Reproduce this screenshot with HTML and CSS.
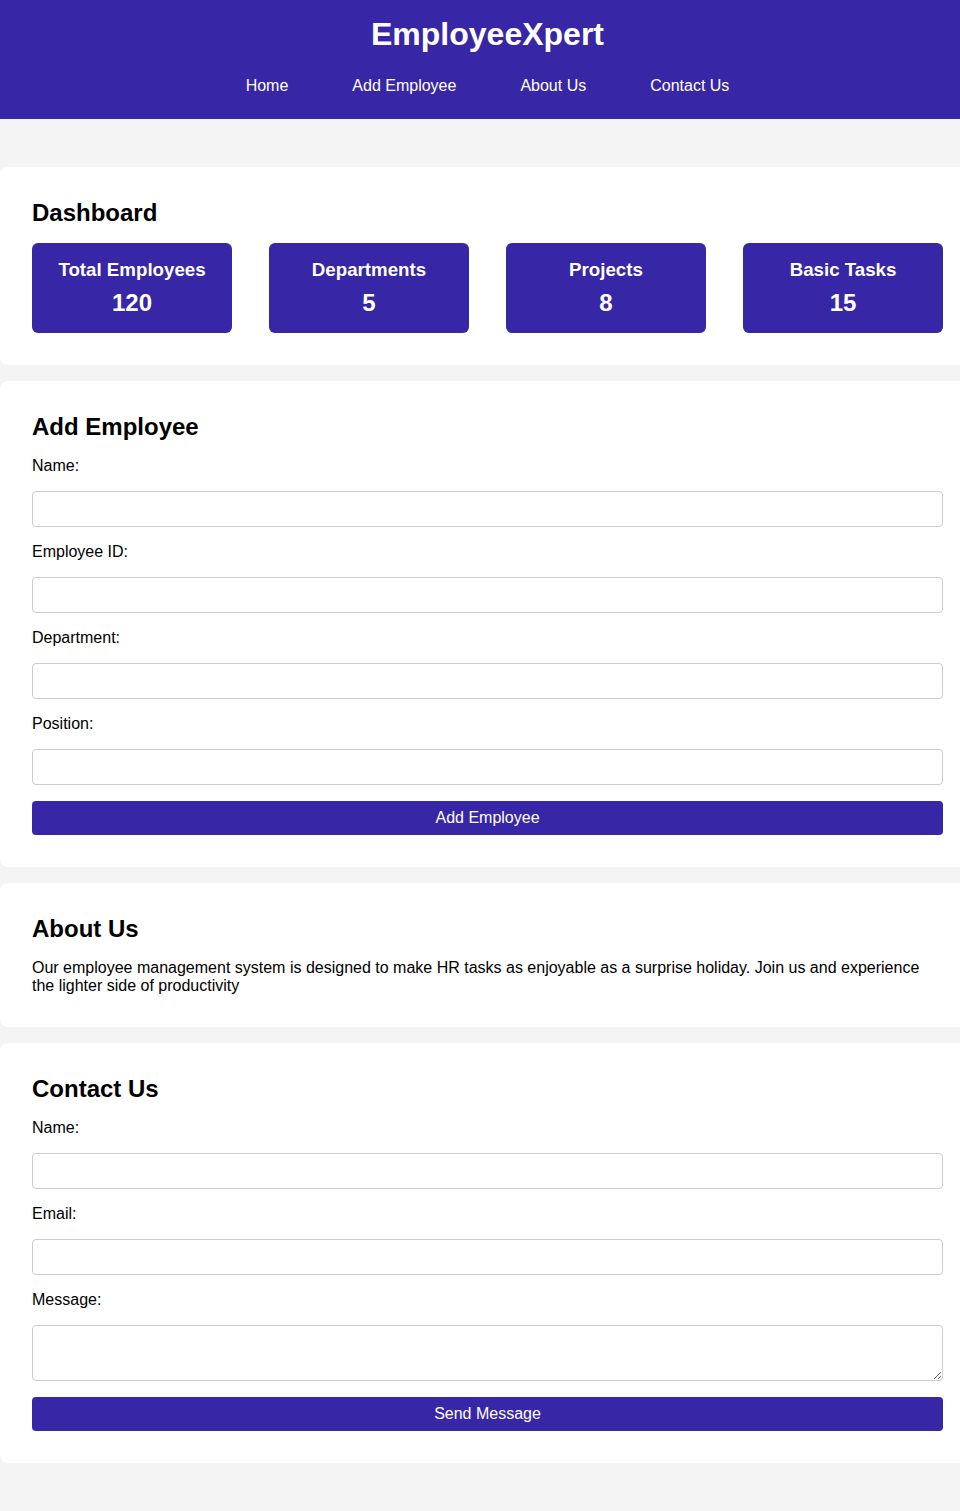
FILE: index.html
```html
<!DOCTYPE html>
<html lang="en">
<head>
<meta charset="utf-8">
<title>EmployeeXpert</title>
<link rel="stylesheet" href="styles.css">
</head>
<body>
<header class="site-header">
  <h1 class="brand">EmployeeXpert</h1>
  <nav class="nav">
    <a href="#" class="nav-link">Home</a>
    <a href="#" class="nav-link">Add Employee</a>
    <a href="#" class="nav-link">About Us</a>
    <a href="#" class="nav-link">Contact Us</a>
  </nav>
</header>
<main class="main">
  <section class="panel">
    <h2 class="panel-title">Dashboard</h2>
    <div class="cards">
      <div class="card"><div class="card-title">Total Employees</div><div class="card-value">120</div></div>
      <div class="card"><div class="card-title">Departments</div><div class="card-value">5</div></div>
      <div class="card"><div class="card-title">Projects</div><div class="card-value">8</div></div>
      <div class="card"><div class="card-title">Basic Tasks</div><div class="card-value">15</div></div>
    </div>
  </section>
  <section class="panel">
    <h2 class="panel-title">Add Employee</h2>
    <form class="form">
      <label class="label">Name:</label>
      <input class="field" type="text">
      <label class="label">Employee ID:</label>
      <input class="field" type="text">
      <label class="label">Department:</label>
      <input class="field" type="text">
      <label class="label">Position:</label>
      <input class="field" type="text">
      <button class="btn" type="button">Add Employee</button>
    </form>
  </section>
  <section class="panel">
    <h2 class="panel-title">About Us</h2>
    <p class="text">Our employee management system is designed to make HR tasks as enjoyable as a surprise holiday. Join us and experience the lighter side of productivity</p>
  </section>
  <section class="panel">
    <h2 class="panel-title">Contact Us</h2>
    <form class="form">
      <label class="label">Name:</label>
      <input class="field" type="text">
      <label class="label">Email:</label>
      <input class="field" type="email">
      <label class="label">Message:</label>
      <textarea class="field area"></textarea>
      <button class="btn" type="button">Send Message</button>
    </form>
  </section>
</main>
</body>
</html>
```
FILE: styles.css
```css
html {
  overflow-x: hidden;
}
body {
  margin: 0;
  width: 975px;
  background: #f4f4f4;
  font-family: "Liberation Sans", Arial, sans-serif;
  font-size: 16px;
  color: #000;
}
.site-header {
  background: #3726a6;
  color: #fff;
  text-align: center;
  padding: 16px 0;
}
.brand {
  margin: 0 0 16px;
  font-size: 32px;
  font-weight: bold;
  line-height: 37px;
}
.nav {
  display: flex;
  justify-content: center;
}
.nav-link {
  color: #fff;
  text-decoration: none;
  margin: 0 32px;
  padding: 8px 0;
  line-height: 18px;
}
.main {
  padding: 32px 0;
}
.panel {
  background: #fff;
  margin: 16px 0;
  padding: 32px;
  border-radius: 8px;
}
.panel-title {
  margin: 0 0 16px;
  font-size: 24px;
  line-height: 28px;
  font-weight: bold;
}
.cards {
  display: flex;
  justify-content: space-between;
}
.card {
  width: 200px;
  height: 90px;
  box-sizing: border-box;
  background: #3726a6;
  color: #fff;
  border-radius: 6px;
  text-align: center;
  padding: 16px 0 0;
}
.card-title {
  font-size: 18.72px;
  font-weight: bold;
  line-height: 21px;
  margin-bottom: 9px;
}
.card-value {
  font-size: 24px;
  font-weight: bold;
  line-height: 28px;
}
.form {
  display: flex;
  flex-direction: column;
}
.label {
  display: block;
  line-height: 18px;
  margin-bottom: 16px;
}
.field {
  display: block;
  box-sizing: border-box;
  width: 100%;
  height: 36px;
  padding: 8px;
  border: 1px solid #ccc;
  border-radius: 4px;
  font-family: "Liberation Sans", Arial, sans-serif;
  font-size: 16px;
  margin: 0 0 16px;
  background: #fff;
}
.area {
  height: 56px;
}
.btn {
  display: block;
  width: 100%;
  height: 34px;
  background: #3726a6;
  color: #fff;
  border: none;
  border-radius: 4px;
  font-family: "Liberation Sans", Arial, sans-serif;
  font-size: 16px;
  padding: 8px;
  line-height: 18px;
}
.text {
  margin: 0;
  line-height: 18px;
}
```
